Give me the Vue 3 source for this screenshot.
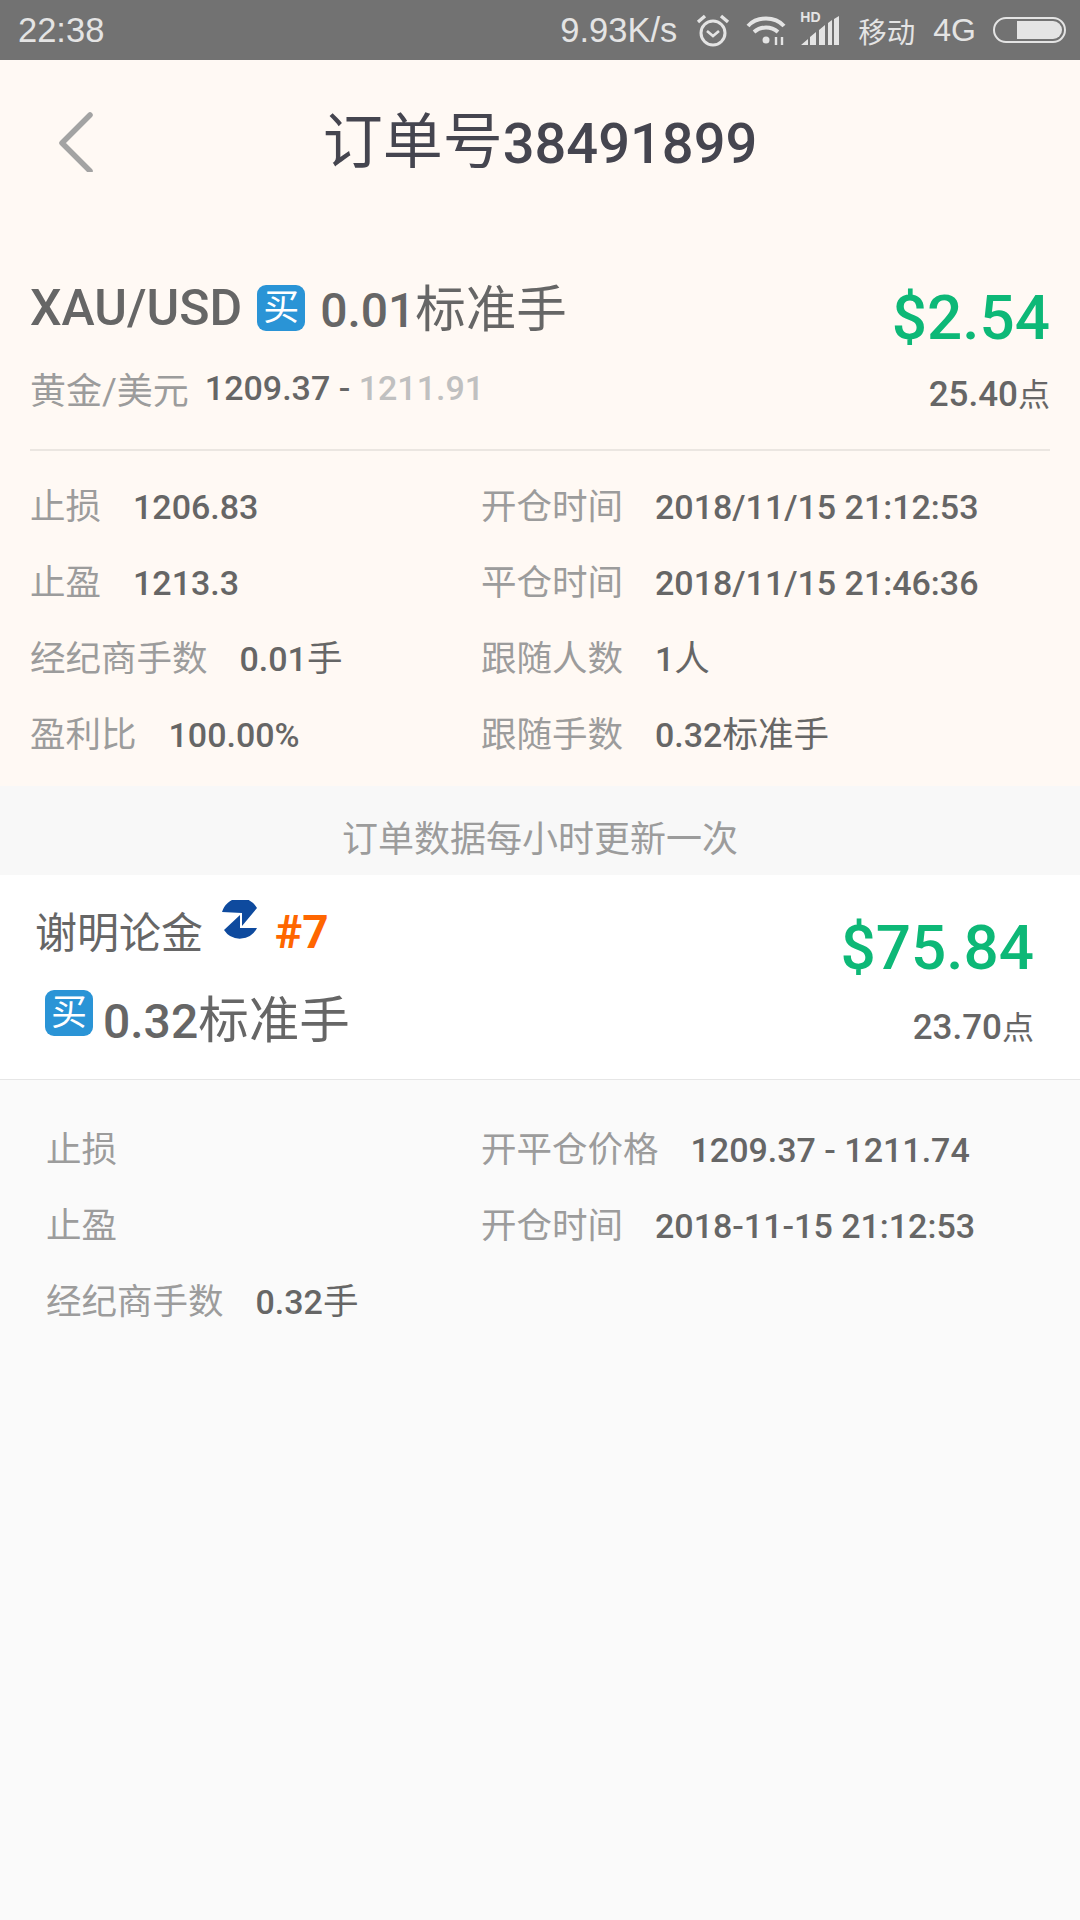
<template>
  <div class="page">
    <div class="status-bar">
      <span class="clock">22:38</span>
      <div class="status-right">
        <span class="speed">9.93K/s</span>
        <svg class="alarm" width="34" height="34" viewBox="0 0 34 34" fill="none" stroke="#e4e4e4">
          <circle cx="17" cy="20" r="12" stroke-width="3" />
          <path d="M11 18l6 5 6-5" stroke-width="2.6" />
          <path d="M2 9 9 3M32 9 25 3" stroke-width="3.4" />
        </svg>
        <svg class="wifi" width="40" height="30" viewBox="0 0 40 30" fill="none" stroke="#e4e4e4" stroke-width="4">
          <path d="M2 11C11 1 29 1 38 11" />
          <path d="M8 17c7-6 17-6 24 0" />
          <circle cx="20" cy="25" r="3.5" fill="#e4e4e4" stroke="none" />
          <path d="M30 30v-8M36 30v-8" stroke-width="2.4" />
        </svg>
        <div class="signal">
          <span class="hd">HD</span>
          <svg width="40" height="30" viewBox="0 0 40 30" fill="#e4e4e4">
            <path d="M1 30 8 24v6zM10 30V22l6-5v13zM19 30V15l6-5v20zM28 30V8l4-3v25zM34 30V4l5-3v29z" />
          </svg>
        </div>
        <span class="carrier">移动</span>
        <span class="net">4G</span>
        <div class="battery"><div class="battery-fill" :style="{ width: batteryLevel + '%' }"></div></div>
      </div>
    </div>

    <div class="order-panel">
      <div class="nav">
        <svg class="back" width="36" height="60" viewBox="0 0 36 60" fill="none" stroke="#a3a3a3" stroke-width="5.5" stroke-linecap="round" stroke-linejoin="round">
          <path d="M32 3 4 31l28 28" />
        </svg>
        <h1 class="title">订单号<b>38491899</b></h1>
      </div>

      <div class="summary">
        <div class="summary-left">
          <div class="symbol-line">
            <span class="symbol">XAU/USD</span>
            <span class="buy-tag">买</span>
            <span class="lots"><b>0.01</b>标准手</span>
          </div>
          <div class="price-line">
            <span class="symbol-cn">黄金/美元</span>
            <span class="prices">1209.37 - <i>1211.91</i></span>
          </div>
        </div>
        <div class="summary-right">
          <div class="profit">$2.54</div>
          <div class="points"><b>25.40</b>点</div>
        </div>
      </div>

      <div class="detail-grid order-grid">
        <div v-for="row in orderRows" :key="row.label" class="detail-item">
          <span class="detail-label">{{ row.label }}</span>
          <span class="detail-value">{{ row.value }}<em v-if="row.unit">{{ row.unit }}</em></span>
        </div>
      </div>
    </div>

    <div class="notice">订单数据每小时更新一次</div>

    <div class="follower">
      <div class="follower-left">
        <div class="follower-name">
          <span class="name">谢明论金</span>
          <svg class="logo" width="36" height="40" viewBox="0 0 36 40" fill="#0e4a9e">
            <path d="M0 12A19 19 0 0 1 35 8L20 26V13z" />
            <path d="M2 30 18 15V28H35A19 19 0 0 1 2 30z" />
          </svg>
          <span class="rank">#7</span>
        </div>
        <div class="follower-lots">
          <span class="buy-tag">买</span>
          <span class="lots"><b>0.32</b>标准手</span>
        </div>
      </div>
      <div class="summary-right follower-right">
        <div class="profit">$75.84</div>
        <div class="points"><b>23.70</b>点</div>
      </div>
    </div>

    <div class="detail-grid follower-grid">
      <div v-for="row in followerRows" :key="row.label" class="detail-item">
        <span class="detail-label">{{ row.label }}</span>
        <span class="detail-value">{{ row.value }}<em v-if="row.unit">{{ row.unit }}</em></span>
      </div>
    </div>
  </div>
</template>

<script setup>
const batteryLevel = 70

const orderRows = [
  { label: '止损', value: '1206.83' },
  { label: '开仓时间', value: '2018/11/15 21:12:53' },
  { label: '止盈', value: '1213.3' },
  { label: '平仓时间', value: '2018/11/15 21:46:36' },
  { label: '经纪商手数', value: '0.01', unit: '手' },
  { label: '跟随人数', value: '1', unit: '人' },
  { label: '盈利比', value: '100.00%' },
  { label: '跟随手数', value: '0.32', unit: '标准手' }
]

const followerRows = [
  { label: '止损', value: '' },
  { label: '开平仓价格', value: '1209.37 - 1211.74' },
  { label: '止盈', value: '' },
  { label: '开仓时间', value: '2018-11-15 21:12:53' },
  { label: '经纪商手数', value: '0.32', unit: '手' }
]
</script>

<style>
html, body {
  margin: 0;
  background: #fafafa;
}
</style>

<style scoped>
.page {
  width: 1080px;
  height: 1920px;
  overflow: hidden;
  background: #fafafa;
  font-family: Roboto, "Noto Sans CJK SC", sans-serif;
  color: #666;
}

.status-bar {
  height: 60px;
  box-sizing: border-box;
  padding: 0 14px 0 18px;
  display: flex;
  align-items: center;
  justify-content: space-between;
  background: #727272;
  color: #e4e4e4;
  font-size: 34.5px;
  font-family: "Liberation Sans", "Noto Sans CJK SC", sans-serif;
}

.status-right {
  display: flex;
  align-items: center;
}

.alarm { margin-left: 19px; }
.wifi { margin-left: 16px; }

.signal {
  position: relative;
  width: 40px;
  height: 30px;
  margin-left: 14px;
}

.signal svg { display: block; }

.hd {
  position: absolute;
  left: 0;
  top: -5px;
  font-size: 14px;
  line-height: 14px;
  font-weight: 700;
}

.carrier {
  margin-left: 18px;
  font-size: 28.5px;
}

.net { margin-left: 18px; font-size: 32px; }

.battery {
  width: 73px;
  height: 26px;
  margin-left: 17px;
  box-sizing: border-box;
  border: 2.5px solid #e4e4e4;
  border-radius: 13px;
  padding: 2px;
  display: flex;
  justify-content: flex-end;
}

.battery-fill {
  background: #e4e4e4;
  border-radius: 0 9px 9px 0;
}

.order-panel {
  height: 726px;
  box-sizing: border-box;
  background: #fff9f4;
}

.nav {
  position: relative;
  height: 166px;
  box-sizing: border-box;
  padding-bottom: 14px;
  display: flex;
  align-items: center;
  justify-content: center;
}

.back {
  position: absolute;
  left: 58px;
  top: 52px;
}

.title {
  margin: 0;
  font-size: 60px;
  font-weight: 400;
  color: #45454f;
}

.title b {
  font-size: 56px;
  font-weight: 500;
}

.summary {
  margin: 0 30px;
  height: 225px;
  box-sizing: border-box;
  padding-top: 54px;
  display: flex;
  justify-content: space-between;
  border-bottom: 2px solid #ebe6e1;
}

.symbol-line {
  display: flex;
  align-items: center;
  height: 56px;
}

.symbol {
  font-size: 50px;
  font-weight: 500;
}

.buy-tag {
  width: 48px;
  height: 46px;
  margin-left: 15px;
  display: flex;
  align-items: center;
  justify-content: center;
  border-radius: 9px;
  background: #2a94d6;
  color: #fff;
  font-size: 36px;
  line-height: 1;
}

.lots {
  margin-left: 15px;
  font-size: 50.5px;
  white-space: nowrap;
}

.symbol-line .lots {
  margin-bottom: 6px;
}

.lots b {
  font-weight: 500;
  font-size: 48px;
}

.price-line {
  margin-top: 27px;
  display: flex;
  align-items: center;
  height: 50px;
}

.symbol-cn {
  font-size: 36px;
  color: #9c9c9c;
}

.prices {
  margin-left: 16px;
  font-size: 34px;
  font-weight: 500;
}

.prices i {
  font-style: normal;
  color: #c0c0c0;
}

.summary-right {
  text-align: right;
}

.profit {
  color: #0db877;
  font-size: 62px;
  font-weight: 500;
  line-height: 76px;
}

.points {
  margin-top: 17px;
  font-size: 32px;
  line-height: 44px;
}

.points b {
  font-size: 35px;
  font-weight: 500;
}

.detail-grid {
  display: grid;
  grid-template-columns: 451px 1fr;
  grid-auto-rows: 76px;
  align-items: center;
}

.order-grid {
  padding: 14px 30px 0;
}

.detail-item {
  display: flex;
  align-items: baseline;
  gap: 32px;
  white-space: nowrap;
}

.detail-label {
  font-size: 35.5px;
  color: #9c9c9c;
}

.detail-value {
  font-size: 34px;
  font-weight: 500;
}

.detail-value em {
  font-style: normal;
  font-size: 35.5px;
  font-weight: 400;
}

.notice {
  height: 89px;
  box-sizing: border-box;
  padding-top: 10px;
  display: flex;
  align-items: center;
  justify-content: center;
  background: #f8f8f8;
  color: #9c9c9c;
  font-size: 36px;
}

.follower {
  height: 205px;
  box-sizing: border-box;
  padding: 0 46px 0 35px;
  display: flex;
  justify-content: space-between;
  background: #fff;
  border-bottom: 1px solid #e6e6e6;
}

.follower-name {
  display: flex;
  align-items: center;
  height: 60px;
  margin-top: 24px;
}

.name {
  font-size: 42px;
}

.logo {
  align-self: flex-start;
  margin: 1px 0 0 19px;
}

.rank {
  margin: 5px 0 0 17px;
  color: #ff6600;
  font-size: 46px;
  font-weight: 700;
}

.follower-lots {
  display: flex;
  align-items: center;
  margin-top: 20px;
  margin-left: 10px;
}

.follower-lots .buy-tag {
  margin: 0 0 6px;
}

.follower-lots .lots {
  margin-left: 10px;
}

.follower-right {
  padding-top: 35px;
}

.follower-right .points {
  margin-top: 20px;
}

.follower-grid {
  padding: 28px 46px 0;
  grid-template-columns: 435px 1fr;
}
</style>
